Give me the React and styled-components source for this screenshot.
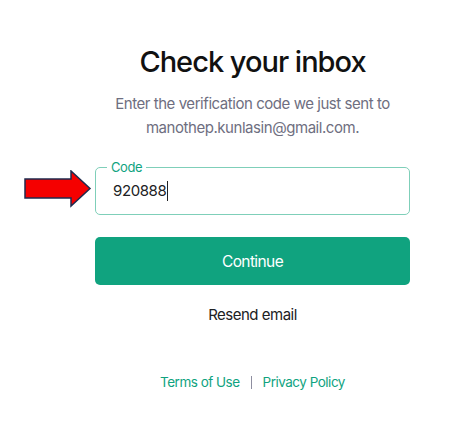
import React from 'react';
import styled, { createGlobalStyle } from 'styled-components';

const GlobalStyle = createGlobalStyle`
  body {
    margin: 0;
    background: #fff;
    font-family: Inter, "Noto Sans", sans-serif;
  }
`;

const Page = styled.main`
  width: 469px;
  height: 448px;
  padding: 42px 0 0 95px;
  box-sizing: border-box;
`;

const Panel = styled.section`
  width: 315px;
  display: flex;
  flex-direction: column;
  align-items: center;
  text-align: center;
`;

const Title = styled.h1`
  margin: 0;
  font-size: 29px;
  line-height: 40px;
  font-weight: 500;
  color: #111;
  letter-spacing: -1px;
`;

const Subtitle = styled.p`
  margin: 10px 0 0;
  font-size: 15px;
  line-height: 24px;
  color: #6e6e80;
  letter-spacing: -0.45px;
`;

const Field = styled.div`
  position: relative;
  margin-top: 27px;
  width: 100%;
  height: 48px;
  box-sizing: border-box;
  border: 1px solid #7fcfb9;
  border-radius: 5px;
  display: flex;
  align-items: center;
  padding-left: 17px;
`;

const Label = styled.span`
  position: absolute;
  top: -9px;
  left: 11px;
  padding: 0 4px;
  background: #fff;
  font-size: 13px;
  line-height: 16px;
  color: #10a37f;
  letter-spacing: -0.4px;
`;

const Value = styled.span`
  font-size: 15px;
  color: #202123;
  border-right: 1px solid #202123;
  padding-right: 1px;
  line-height: 20px;
  letter-spacing: -0.4px;
`;

const Arrow = styled.svg`
  position: absolute;
  left: -72px;
  top: 2px;
`;

const Button = styled.button`
  margin-top: 22px;
  width: 100%;
  height: 48px;
  border: none;
  border-radius: 5px;
  background: #10a37f;
  color: #fff;
  font-family: inherit;
  font-size: 15.5px;
  letter-spacing: -0.6px;
`;

const LinkButton = styled.div`
  margin-top: 20px;
  font-size: 15px;
  color: #202123;
  letter-spacing: -0.5px;
`;

const Footer = styled.footer`
  margin-top: 50px;
  display: flex;
  align-items: center;
  gap: 11px;
  font-size: 13.5px;
  color: #10a37f;
  letter-spacing: -0.5px;
`;

const Divider = styled.span`
  width: 1px;
  height: 13px;
  background: #8e8ea0;
`;

export default function App() {
  return (
    <>
      <GlobalStyle />
      <Page>
        <Panel>
          <Title>Check your inbox</Title>
          <Subtitle>
            Enter the verification code we just sent to
            <br />
            manothep.kunlasin@gmail.com.
          </Subtitle>
          <Field>
            <Arrow width="68" height="38" viewBox="0 0 68 38">
              <path
                d="M1 9 H47 V1 L66 18.5 L47 36 V28 H1 Z"
                fill="#f50000"
                stroke="#1f2a4d"
                strokeWidth="1.5"
              />
            </Arrow>
            <Label>Code</Label>
            <Value>920888</Value>
          </Field>
          <Button>Continue</Button>
          <LinkButton>Resend email</LinkButton>
          <Footer>
            <span>Terms of Use</span>
            <Divider />
            <span>Privacy Policy</span>
          </Footer>
        </Panel>
      </Page>
    </>
  );
}
